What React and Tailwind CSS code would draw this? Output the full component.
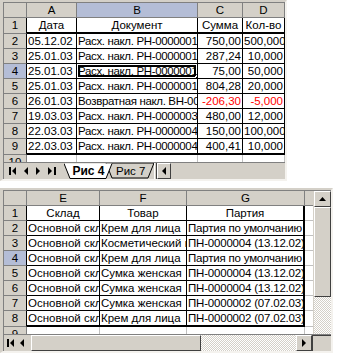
// Two Excel-style sheet fragments: document list on top, stock batches below.

import clsx from 'clsx';

const topCols = [
  { name: 'A', w: 'w-[50px]' },
  { name: 'B', w: 'w-[121px]', active: true, tight: true },
  { name: 'C', w: 'w-[45px]' },
  { name: 'D', w: 'w-[42px]' },
];

const topTitles = ['Дата', 'Документ', 'Сумма', 'Кол-во'];

const topRows = [
  ['05.12.02', 'Расх. накл. РН-0000001', '750,00', '500,000'],
  ['25.01.03', 'Расх. накл. РН-0000001', '287,24', '10,000'],
  ['25.01.03', 'Расх. накл. РН-0000001', '75,00', '50,000'],
  ['25.01.03', 'Расх. накл. РН-0000001', '804,28', '20,000'],
  ['26.01.03', 'Возвратная накл. ВН-0000001', '-206,30', '-5,000', true],
  ['19.03.03', 'Расх. накл. РН-0000003', '480,00', '12,000'],
  ['22.03.03', 'Расх. накл. РН-0000004', '150,00', '100,000'],
  ['22.03.03', 'Расх. накл. РН-0000004', '400,41', '10,000'],
];

const bottomCols = [
  { name: 'E', w: 'w-[73px]' },
  { name: 'F', w: 'w-[87px]' },
  { name: 'G', w: 'w-[118px]' },
];

const bottomTitles = ['Склад', 'Товар', 'Партия'];

const bottomRows = [
  ['Основной склад', 'Крем для лица', 'Партия по умолчанию'],
  ['Основной склад', 'Косметический набор', 'ПН-0000004 (13.12.02)'],
  ['Основной склад', 'Крем для лица', 'Партия по умолчанию'],
  ['Основной склад', 'Сумка женская', 'ПН-0000004 (13.12.02)'],
  ['Основной склад', 'Сумка женская', 'ПН-0000004 (13.12.02)'],
  ['Основной склад', 'Сумка женская', 'ПН-0000002 (07.02.03)'],
  ['Основной склад', 'Крем для лица', 'ПН-0000002 (07.02.03)'],
];

const raised =
  'bg-[#d4d0c8] border border-t-white border-l-white border-r-[#404040] border-b-[#404040]';

const RowHead = ({ label, active, className }) => (
  <div
    className={clsx(
      'w-[23px] shrink-0 overflow-hidden border-b border-b-[#808080] text-center leading-[14px]',
      active ? 'bg-[#b4bdd6]' : 'bg-[#d4d0c8]',
      className
    )}
  >
    {label}
  </div>
);

const Cell = ({ w, align = 'left', className, children }) => (
  <div
    className={clsx(
      'shrink-0 overflow-hidden whitespace-nowrap px-[1px] leading-[14px]',
      w,
      align === 'right' && 'text-right',
      align === 'center' && 'text-center',
      className
    )}
  >
    {children}
  </div>
);

const Tri = ({ dir }) => (
  <svg width="5" height="8" viewBox="0 0 5 8" className="shrink-0">
    {dir === 'left' ? <path d="M4 0V8L0 4Z" fill="#000" /> : <path d="M0 0V8L4 4Z" fill="#000" />}
  </svg>
);

const NavFirst = () => (
  <div className="flex items-center gap-[1px]">
    <div className="h-[8px] w-[2px] bg-black" />
    <Tri dir="left" />
  </div>
);

const NavLast = () => (
  <div className="flex items-center gap-[1px]">
    <Tri dir="right" />
    <div className="h-[8px] w-[2px] bg-black" />
  </div>
);

const checker =
  'bg-[repeating-conic-gradient(#d4d0c8_0_25%,#ffffff_0_50%)] bg-[length:2px_2px]';

function TopSheet() {
  return (
    <div className="w-[287px] border-t-[2px] border-l-[3px] border-b-[2px] border-r-[2px] border-t-[#d4d0c8] border-l-[#d4d0c8] border-b-[#f4f2ee] border-r-[#f4f2ee]">
      <div className="border-t border-l border-[#808080]">
        {/* column letters */}
        <div className="flex h-[15px]">
          <RowHead className="border-r border-r-[#808080]" />
          {topCols.map((c) => (
            <Cell
              key={c.name}
              w={c.w}
              align="center"
              className={clsx(
                'border-r border-b border-[#808080]',
                c.active ? 'bg-[#b4bdd6]' : 'bg-[#d4d0c8]'
              )}
            >
              {c.name}
            </Cell>
          ))}
        </div>

        {/* titles row */}
        <div className="flex h-[16px]">
          <RowHead label="1" className="border-r border-r-black" />
          {topTitles.map((t, i) => (
            <Cell key={t} w={topCols[i].w} align="center" className="border-r border-b-2 border-black bg-white">
              {t}
            </Cell>
          ))}
        </div>

        {topRows.map((r, idx) => {
          const n = idx + 2;
          const last = idx === topRows.length - 1;
          const red = r[4];
          return (
            <div key={n} className={clsx('flex', last ? 'h-[16px]' : 'h-[15px]')}>
              <RowHead label={n} active={n === 4} className="border-r border-r-black" />
              {r.slice(0, 4).map((v, i) => (
                <Cell
                  key={i}
                  w={topCols[i].w}
                  align={i >= 2 ? 'right' : 'left'}
                  className={clsx(
                    'relative border-r border-black bg-white',
                    last ? 'border-b-2' : 'border-b',
                    topCols[i].tight && 'tracking-[-0.35px]',
                    red && i >= 2 && 'text-[#ff0000]'
                  )}
                >
                  {v}
                  {n === 4 && i === 1 && (
                    <>
                      <span className="absolute inset-x-[1px] inset-y-[1px] border-2 border-black" />
                      <span className="absolute right-[-3px] bottom-[-3px] h-[5px] w-[5px] border border-white bg-black" />
                    </>
                  )}
                </Cell>
              ))}
            </div>
          );
        })}

        {/* partially visible row 10 */}
        <div className="flex h-[7px]">
          <RowHead label="10" className="border-r border-r-[#808080] border-b-0" />
          {topCols.map((c) => (
            <Cell key={c.name} w={c.w} className="border-r border-[#c0c0c0] bg-white" />
          ))}
        </div>

        {/* sheet tabs + scroller */}
        <div className="flex h-[17px] items-stretch border-t border-[#808080] bg-[#d4d0c8]">
          <div className="flex w-[60px] shrink-0 items-center justify-around pl-[1px] pr-[4px]">
            <NavFirst />
            <Tri dir="left" />
            <Tri dir="right" />
            <NavLast />
          </div>
          <div className="relative w-[90px] shrink-0">
            <svg width="90" height="16" viewBox="0 0 90 16" className="absolute inset-0">
              <path d="M42 0L48 15H84L90 0Z" fill="#d4d0c8" stroke="#000" strokeWidth="1" />
              <path d="M0 0.5L6 15.5H42L48 0.5" fill="#fff" stroke="#000" strokeWidth="1" />
            </svg>
            <div className="relative flex h-full items-center">
              <span className="w-[48px] pl-[1px] text-center text-[12px] font-bold leading-[14px]">Рис 4</span>
              <span className="w-[42px] pl-[4px] leading-[14px]">Рис 7</span>
            </div>
          </div>
          <div className="w-[3px] shrink-0 border-l border-r border-l-white border-r-[#404040]" />
          <div className={clsx('flex w-[14px] shrink-0 items-center justify-center', raised)}>
            <Tri dir="left" />
          </div>
          <div className="flex-1 bg-[#d4d0c8]" />
        </div>
      </div>
    </div>
  );
}

function BottomSheet() {
  return (
    <div className="mt-[7px] w-[333px] border-t-[2px] border-l-[3px] border-b-[2px] border-r-[2px] border-t-[#d4d0c8] border-l-[#d4d0c8] border-b-[#f4f2ee] border-r-[#f4f2ee]">
      <div className="border-t border-l border-[#808080]">
        <div className="flex">
          <div className="w-[309px] shrink-0">
            <div className="flex h-[15px]">
              <RowHead className="border-r border-r-[#808080]" />
              {bottomCols.map((c) => (
                <Cell key={c.name} w={c.w} align="center" className="border-r border-b border-[#808080] bg-[#d4d0c8]">
                  {c.name}
                </Cell>
              ))}
              <Cell w="w-[8px]" className="border-b border-[#808080] bg-[#d4d0c8]" />
            </div>

            <div className="flex h-[15px]">
              <RowHead label="1" className="border-r border-r-black" />
              {bottomTitles.map((t, i) => (
                <Cell
                  key={t}
                  w={bottomCols[i].w}
                  align="center"
                  className={clsx('border-b border-black bg-white', i === 2 ? 'border-r-2' : 'border-r')}
                >
                  {t}
                </Cell>
              ))}
              <Cell w="w-[8px]" className="border-b border-[#c0c0c0] bg-white" />
            </div>

            {bottomRows.map((r, idx) => {
              const n = idx + 2;
              const last = idx === bottomRows.length - 1;
              return (
                <div key={n} className={clsx('flex', last ? 'h-[16px]' : 'h-[15px]')}>
                  <RowHead label={n} active={n === 4} className="border-r border-r-black" />
                  {r.map((v, i) => (
                    <Cell
                      key={i}
                      w={bottomCols[i].w}
                      className={clsx(
                        'border-black bg-white',
                        i === 2 ? 'border-r-2 tracking-[-0.2px]' : 'border-r',
                        last ? 'border-b-2' : 'border-b'
                      )}
                    >
                      {v}
                    </Cell>
                  ))}
                  <Cell w="w-[8px]" className="border-b border-[#c0c0c0] bg-white" />
                </div>
              );
            })}

            <div className="flex h-[7px]">
              <RowHead label="9" className="border-r border-r-[#808080] border-b-0" />
              {bottomCols.map((c) => (
                <Cell key={c.name} w={c.w} className="border-r border-[#c0c0c0] bg-white" />
              ))}
              <Cell w="w-[8px]" className="bg-white" />
            </div>
          </div>

          {/* vertical scrollbar */}
          <div className="flex w-[18px] shrink-0 flex-col border-l border-[#d4d0c8] bg-[#d4d0c8]">
            <div className={clsx('flex h-[16px] items-center justify-center', raised)}>
              <svg width="7" height="4" viewBox="0 0 7 4">
                <path d="M0 4H7L3.5 0Z" fill="#000" />
              </svg>
            </div>
            <div className={clsx('h-[90px]', raised)} />
            <div className={clsx('flex-1', checker)} />
          </div>
        </div>

        {/* horizontal scrollbar row */}
        <div className="flex h-[17px] border-t border-[#808080] bg-[#d4d0c8]">
          <div className="flex w-[27px] shrink-0 items-center justify-around pr-[3px]">
            <NavFirst />
            <Tri dir="left" />
          </div>
          <div className={clsx('w-[170px] shrink-0', raised)} />
          <div className={clsx('flex-1', checker)} />
          <div className={clsx('flex w-[16px] shrink-0 items-center justify-center', raised)}>
            <Tri dir="right" />
          </div>
          <div className="w-[19px] shrink-0 border-t border-l border-[#404040] bg-[#d4d0c8]" />
        </div>
      </div>
    </div>
  );
}

export default function App() {
  return (
    <div className="h-[355px] w-[337px] overflow-hidden bg-white font-['Liberation_Sans',Arial,sans-serif] text-[11.5px] text-black">
      <TopSheet />
      <BottomSheet />
    </div>
  );
}
